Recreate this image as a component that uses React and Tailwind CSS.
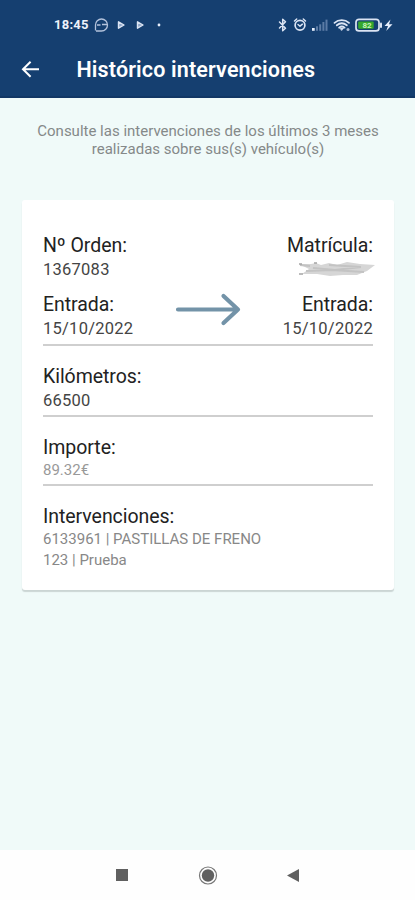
import React from 'react';

function StatusIcons() {
  return (
    <svg className="h-[18px] w-[118px]" viewBox="0 0 118 18" fill="none" stroke="#dbe4f3" strokeLinecap="round" strokeLinejoin="round">
      <path d="M3.500 6l6 6.200-2.800 2.600V3.200l2.800 2.600-6 6.200" strokeWidth="1.500" />
      <circle cx="24" cy="9.300" r="4.900" strokeWidth="1.700" />
      <path d="M18.500 5l2.200-2M29.500 5l-2.200-2M22 8.500l2 1.700 2.400-2" strokeWidth="1.500" />
      <g stroke="none" fill="#5b7ba5">
        <rect x="40" y="10.300" width="2" height="4.500" />
        <rect x="43.200" y="8.300" width="2" height="6.500" />
        <rect x="46.400" y="6" width="2" height="8.800" />
        <rect x="49.500" y="3.600" width="2" height="11.200" />
      </g>
      <rect x="36" y="12" width="2.700" height="2.800" fill="#e6eefb" stroke="none" />
      <path d="M58.500 6.800c4-3.600 10.500-3.600 14.500 0M60.800 9.300c3-2.500 7-2.500 10 0M63.100 11.600c1.700-1.300 3.800-1.300 5.500 0" strokeWidth="1.800" />
      <path d="M63.800 12h4l-2 2.500z" fill="#dbe4f3" strokeWidth=".5" />
      <circle cx="72" cy="13.500" r="1.500" fill="#a9bbd6" stroke="none" />
      <rect x="80" y="3.300" width="23" height="11.600" rx="3" strokeWidth="1.700" />
      <path d="M105 7.500v3.500" strokeWidth="2" />
      <rect x="82.200" y="5.400" width="15.500" height="7.400" rx="1" fill="#35a72d" stroke="none" />
      <text x="86.500" y="12" fontSize="8" fontWeight="700" fill="#c6f3b8" stroke="none" fontFamily="Roboto, sans-serif">82</text>
      <path d="M114.500 3.500l-6 6.500h3.500l-1.800 5 6.300-6.800h-3.500z" fill="#e6eefb" stroke="none" />
    </svg>
  );
}

function NotificationIcons() {
  return (
    <svg className="h-[16px] w-[72px]" viewBox="0 0 72 16" fill="none" stroke="#b4c3dc">
      <path d="M1.500 13.500V8a6 6 0 1 1 6 6H2M3 8h3.500M8 7.500h5" strokeWidth="1.300" />
      <path d="M24.500 4.800v6.400l5.500-3.200zM43.500 4.800v6.400L49 8z" fill="#8ca4c6" stroke="#dbe4f3" strokeWidth="1.400" strokeLinejoin="round" />
      <circle cx="65" cy="8" r="1.400" fill="#e6eefb" stroke="none" />
    </svg>
  );
}

function Header() {
  return (
    <header className="flex h-[98px] flex-col border-b-2 border-[#123765] bg-[#153f70] text-white">
      <div className="flex h-12 items-center justify-between pt-px pr-[21px] pl-[54px]">
        <div className="flex items-center gap-[5px]">
          <span className="text-[13px] leading-4 font-bold tracking-[0.25px] text-[#edf2fb]">18:45</span>
          <NotificationIcons />
        </div>
        <StatusIcons />
      </div>
      <div className="flex h-11 items-center gap-[36.5px] pl-[21px]">
        <svg className="h-[18px] w-[19px]" viewBox="0 0 19 18" fill="none" stroke="#fff" strokeWidth="2">
          <path d="M18 8.200H2M9.600 0.700L2 8.200l7.600 7.500" />
        </svg>
        <h1 className="text-[21.5px] leading-6 font-semibold tracking-[0.15px] whitespace-nowrap">Histórico intervenciones</h1>
      </div>
    </header>
  );
}

function Field({ label, children }) {
  return (
    <div className="flex flex-col">
      <span className="text-[19.5px] leading-6 tracking-[-0.05px] text-[#222]">{label}</span>
      {children}
    </div>
  );
}

function Value({ children }) {
  return <span className="text-[16.5px] leading-6 tracking-[0.25px] text-[#444]">{children}</span>;
}

function RedactedPlate() {
  return (
    <svg className="h-6 w-[76px] self-end overflow-visible" viewBox="0 0 76 24" fill="none">
      <path d="M2 6l12 0 5-1 5 2 8-2 8 2 10-3 13 2 15 1-8 6-10 4-14 0-13 1-13-2-15 0 7-5z" fill="#d6d6d6" />
      <path d="M3 7l10 1M16 10l22 2 26-3M32 7l32 2M9 13l26-1 32 2" stroke="#c3c3c3" strokeWidth="2" />
      <path d="M2 6h3M2 16h4M17 5h3" stroke="#a5a5a5" strokeWidth="1.500" />
    </svg>
  );
}

function OrderSummary() {
  return (
    <section className="flex h-[146px] items-end justify-between border-b-2 border-[#cfcfcf] pb-[3px]">
      <div className="flex w-[120px] flex-col gap-[11px]">
        <Field label="Nº Orden:"><Value>1367083</Value></Field>
        <Field label="Entrada:"><Value>15/10/2022</Value></Field>
      </div>
      <svg className="box-content h-[34px] w-[66px] pb-[15px]" viewBox="0 0 66 34" fill="none" stroke="#7393a8" strokeWidth="4.200" strokeLinecap="round" strokeLinejoin="round">
        <path d="M3 17.500h60M48.500 4l14.500 13.500L48.500 31" />
      </svg>
      <div className="flex w-[120px] flex-col gap-[11px] text-right">
        <Field label="Matrícula:"><RedactedPlate /></Field>
        <Field label="Entrada:"><Value>15/10/2022</Value></Field>
      </div>
    </section>
  );
}

export default function App() {
  return (
    <div className="flex h-[900px] w-full flex-col bg-[#f0faf9] font-[Roboto,sans-serif]">
      <Header />
      <main className="flex flex-1 flex-col gap-[42px] pt-6 pr-[21px] pl-[22px]">
        <p className="text-center text-[15px] leading-[18px] text-[#858989]">
          Consulte las intervenciones de los últimos 3 meses<br />realizadas sobre sus(s) vehículo(s)
        </p>
        <article className="flex h-[390px] flex-col rounded-[3px] bg-white px-[21px] shadow-[0_2px_1px_#cbd5d4]">
          <OrderSummary />
          <section className="h-[71px] border-b-2 border-[#cfcfcf] pt-[19px]">
            <Field label="Kilómetros:"><Value>66500</Value></Field>
          </section>
          <section className="h-[69px] border-b-2 border-[#cfcfcf] pt-[19px]">
            <Field label="Importe:">
              <span className="text-[15px] leading-5 text-[#999]">89.32€</span>
            </Field>
          </section>
          <section className="pt-[19px]">
            <Field label="Intervenciones:">
              <ul className="text-[15px] leading-[21px] text-[#888]">
                <li>6133961 | PASTILLAS DE FRENO</li>
                <li>123 | Prueba</li>
              </ul>
            </Field>
          </section>
        </article>
      </main>
      <nav className="flex h-[50px] items-center justify-center gap-[66px] bg-[#fefefe]">
        <svg className="size-5" viewBox="0 0 20 20" fill="#606060">
          <rect x="4" y="4" width="12" height="12" />
        </svg>
        <svg className="size-5" viewBox="0 0 20 20" fill="#606060">
          <circle cx="10" cy="10.500" r="6.200" />
          <circle cx="10" cy="10.500" r="8.500" fill="none" stroke="#777" strokeWidth="1.200" />
        </svg>
        <svg className="size-5" viewBox="0 0 20 20" fill="#606060">
          <path d="M3 10.500l12-6.500v13z" />
        </svg>
      </nav>
    </div>
  );
}
